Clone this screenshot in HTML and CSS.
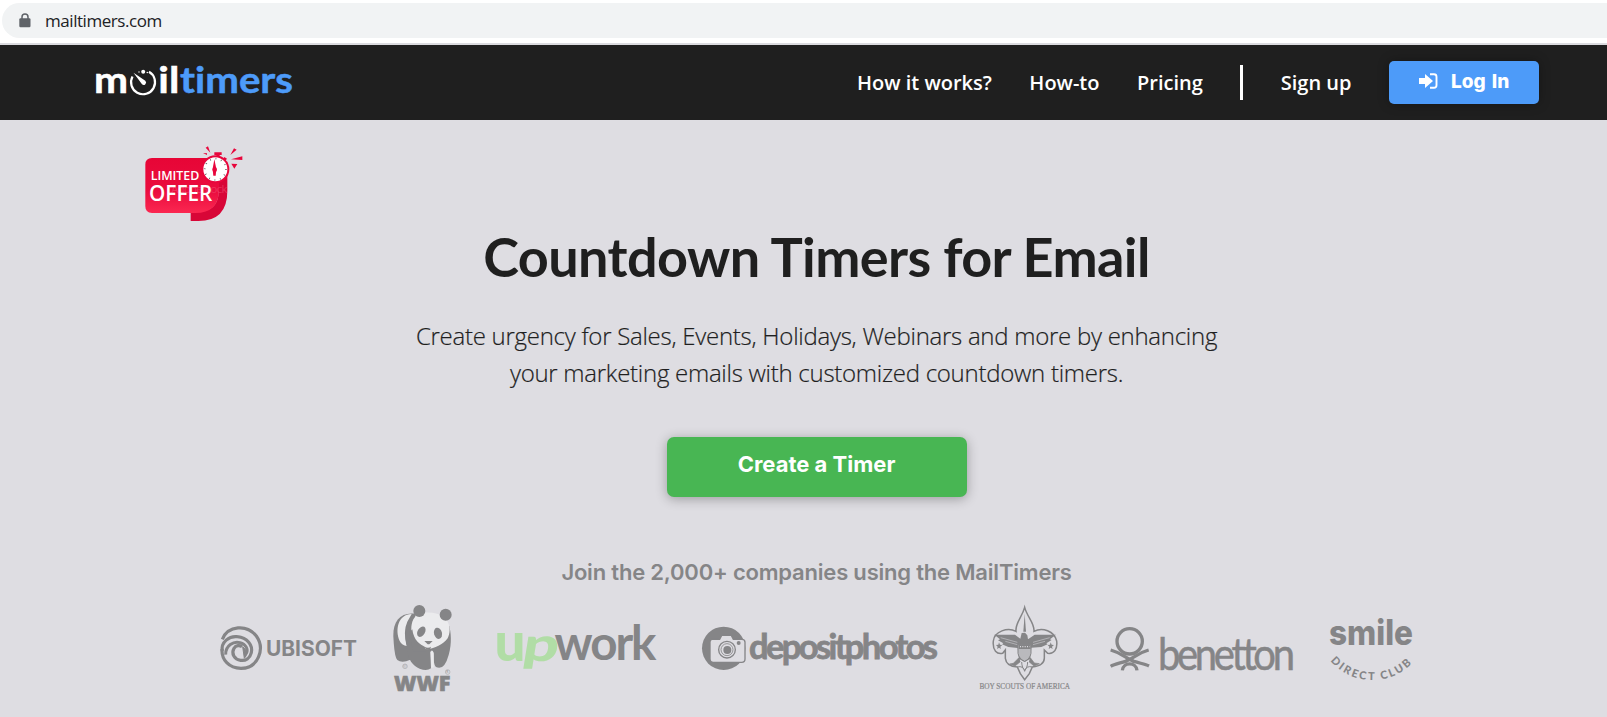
FILE: index.html
```html
<!DOCTYPE html>
<html lang="en">
<head>
<meta charset="utf-8">
<title>MailTimers</title>
<link rel="stylesheet" href="styles.css">
</head>
<body>
<div class="browser">
  <div class="address">
    <svg class="lock" viewBox="0 0 12 15"><path d="M3 6V4a3 3 0 0 1 6 0v2" fill="none" stroke="#5f6368" stroke-width="1.5"/><rect x=".3" y="5.3" width="11.2" height="9" rx="1.2" fill="#5f6368"/></svg>
    <span class="url">mailtimers.com</span>
  </div>
</div>
<header class="nav">
  <svg class="brand" viewBox="90 48 210 66">
    <g font-family="Lato" font-weight="700" font-size="36" stroke-width=".5">
      <text x="94" y="92.800" fill="#fff" stroke="#fff" textLength="34" lengthAdjust="spacingAndGlyphs">m</text>
      <text x="158.300" y="92.800" fill="#fff" stroke="#fff" textLength="21" lengthAdjust="spacingAndGlyphs">il</text>
      <text x="180" y="92.800" fill="#4d9bf9" stroke="#4d9bf9" textLength="113" lengthAdjust="spacingAndGlyphs">timers</text>
    </g>
    <path d="M149 71.800A12 12 0 1 1 132.500 76.500" fill="none" stroke="#fff" stroke-width="2.200"/>
    <path d="M133.500 72.800L145.300 80.800A2.200 2.200 0 0 1 142 84.200Z" fill="#fff"/>
    <circle cx="143.200" cy="71.700" r="2" fill="#fff"/><circle cx="139" cy="72" r=".7" fill="#fff"/><circle cx="147.300" cy="72.500" r=".8" fill="#fff"/>
  </svg>
  <nav class="links">
    <a>How it works?</a><a>How-to</a><a>Pricing</a><i class="rule"></i><a>Sign up</a>
    <a class="login"><svg class="enter" viewBox="0 0 19 16"><path d="M0 5h6V1l8 7-8 7v-4H0z" fill="#fff"/><path d="M11 1.200h4a2.500 2.500 0 0 1 2.500 2.500v8.600a2.500 2.500 0 0 1-2.500 2.500h-4" fill="none" stroke="#fff" stroke-width="1.900"/></svg><span>Log In</span></a>
  </nav>
</header>
<main class="hero">
  <svg class="offer" viewBox="0 0 390 300">
    <defs><linearGradient id="red" x1="0" y1="0" x2="0" y2="1"><stop offset="0" stop-color="#e70536"/><stop offset=".6" stop-color="#ea0d3e"/><stop offset="1" stop-color="#fb2751"/></linearGradient></defs>
    <path d="M182 222H240Q270 205 266 150V80H292V168Q292 258 205 258H182Z" fill="#d80637"/>
    <path d="M66 69H267V165Q267 234 195 234H66Q46 234 46 214V89Q46 69 66 69Z" fill="url(#red)"/>
    <text x="124" y="174" class="stock" textLength="168">AdobeStock</text>
    <g class="offer-text"><text x="62" y="136" font-size="40" textLength="146" lengthAdjust="spacingAndGlyphs">LIMITED</text><text x="57" y="199" font-size="64" textLength="190" lengthAdjust="spacingAndGlyphs">OFFER</text></g>
    <path d="M253 52h22v8h-6v8h-10v-8h-6zM283 66l8 5-6 8-6-6z" fill="#e8063c"/>
    <circle cx="256" cy="103" r="39" fill="#fff" stroke="#e8063c" stroke-width="6"/>
    <circle cx="256" cy="103" r="32" fill="none" stroke="#444" stroke-width="5" stroke-dasharray="2 14.750"/>
    <path d="M253 73L259 101 257 122H250L248 101Z" fill="#e8063c"/><circle cx="254" cy="104" r="7" fill="#e8063c"/>
    <path d="M227 38l7-4 7 19zM219 54l12 1v5zM301 60l11-20 8 4zM303 73l34-9v11zM304 86l18 1-9 14z" fill="#e8063c"/>
  </svg>
  <h1>Countdown Timers for Email</h1>
  <p class="lead">Create urgency for Sales, Events, Holidays, Webinars and more by enhancing<br>your marketing emails with customized countdown timers.</p>
  <a class="cta">Create a Timer</a>
  <p class="join">Join the 2,000+ companies using the MailTimers</p>
  <div class="logos">
    <svg width="138" height="100" viewBox="219 602 138 100">
      <g transform="translate(200 590) scale(.33333)" fill="none" stroke="#858587" stroke-width="9.500">
        <path d="M67 148C84 106 141 102 169 138C196 176 175 235 123 235C87 235 64 209 66 177"/>
        <path d="M67 183C62 156 88 137 112 140C142 143 159 166 154 188C150 205 137 213 122 211C103 209 93 191 102 175C108 165 119 165 126 170"/>
        <path d="M77 194C76 166 101 153 120 158C139 163 146 180 138 192" stroke-width="9"/>
        <path d="M128 170Q150 188 133 205Z" fill="#858587" stroke-width="3"/>
      </g>
      <text x="266" y="656.300" font-family="Inter" font-size="21" font-weight="700" textLength="91" lengthAdjust="spacingAndGlyphs">UBISOFT</text>
    </svg>
    <svg width="64" height="100" viewBox="393 602 64 100">
      <g transform="translate(200 590) scale(.33333)">
        <path d="M645 71C602 66 579 93 580 137C582 176 585 202 592 210Q606 221 631 209L650 170Z"/>
        <path d="M635 72C595 73 584 118 599 153Q606 167 621 168Q608 125 622 95Z" fill="#ebebed"/>
        <path d="M644 80C616 86 612 132 620 168C622 211 640 228 659 236Q680 245 693 235L691 186Q698 176 701 190C701 210 701 224 708 231Q733 243 746 195C757 158 752 126 748 108Z"/>
        <path d="M637 95C645 67 683 63 711 71C743 78 759 113 743 145C730 163 702 176 684 178C650 174 625 133 637 95Z" fill="#ebebed"/>
        <path d="M637 118C640 151 662 165 674 170L680 184H640L626 130Z"/>
        <circle cx="658" cy="63" r="18"/><circle cx="737" cy="74" r="18"/>
        <ellipse cx="664" cy="125" rx="11" ry="17" transform="rotate(30 664 125)"/><ellipse cx="714" cy="130" rx="12" ry="17" transform="rotate(-15 714 130)"/>
        <path d="M673 153h25l-10 10h-5zM673 170q12 6 20 0l-3 9q-12 2-17-9z"/>
        <path d="M692 186Q701 178 701 196V232L694 234Z" fill="#ebebed"/>
        <g fill="none" stroke="#aaaaad" stroke-width="2"><circle cx="615" cy="229" r="7"/><circle cx="743" cy="246" r="7"/></g><text x="610" y="234" font-size="12">©</text><text x="739" y="250" font-size="10">R</text>
      </g>
      <text x="394" y="691.300" font-family="Open Sans" font-size="20.500" font-weight="800" textLength="56.500" lengthAdjust="spacingAndGlyphs" stroke="#858587" stroke-width=".6">WWF</text>
    </svg>
    <svg width="170" height="100" viewBox="493 602 170 100" font-family="Lato" font-weight="900">
      <g fill="#b1dda6"><text x="494.500" y="660.500" font-size="53" textLength="31" lengthAdjust="spacingAndGlyphs">u</text><text transform="translate(521 660.500) skewX(-9)" font-size="47" textLength="36" lengthAdjust="spacingAndGlyphs">p</text></g>
      <text x="554.500" y="660.300" font-size="47.500" font-weight="700" textLength="102" lengthAdjust="spacing">work</text>
    </svg>
    <svg width="242" height="100" viewBox="699 602 242 100">
      <g transform="translate(690 600) scale(.33333)"><circle cx="101" cy="145" r="65"/><path d="M67 118H89L95 106H124L130 118H156Q165 118 165 127V177Q165 187 155 187H69Q60 187 60 178V126Q60 118 67 118Z" fill="#dedde2" stroke="#858587" stroke-width="4"/><circle cx="111" cy="149" r="25" fill="none" stroke="#858587" stroke-width="4"/><circle cx="111" cy="149" r="18" fill="none" stroke="#858587" stroke-width="2.500"/><circle cx="112" cy="150" r="12"/><circle cx="146" cy="129" r="6"/></g>
      <text x="749" y="659.300" font-family="Lato" font-size="34.500" font-weight="700" textLength="189" lengthAdjust="spacing" stroke="#858587" stroke-width=".8">depositphotos</text>
    </svg>
    <svg width="95" height="100" viewBox="977 602 95 100">
      <g transform="translate(960 590) scale(.33333)">
        <path d="M194 52C186 82 165 99 168 124C143 111 103 124 100 153C97 182 111 194 128 190L136 180V205C138 221 150 230 172 231L181 251 194 269 208 251 217 231C240 228 254 219 253 202V180L263 190C282 193 293 178 290 153C283 123 247 111 222 124C224 99 202 82 194 52Z" fill="none" stroke="#858587" stroke-width="4.500"/>
        <path d="M194 72L198 125H190Z"/>
        <path d="M103 134H165L181 146 185 129 195 128 202 136 204 148 224 134H288L270 148 275 150 259 160 263 163 244 171 214 173 210 207 194 216 177 207 173 174 145 171 126 163 130 160 114 151 120 148Z"/>
        <path d="M122 143l50 14M136 154l36 10M269 143l-50 14M255 154l-36 10" stroke="#dedde2" stroke-width="1.500"/>
        <path d="M174 164H213V190Q210 207 194 214Q177 207 174 190Z" fill="#b9b9bd" stroke="#858587" stroke-width="3"/><path d="M176 165h36v12h-36z"/><path d="M180 170h29" stroke="#dedde2" stroke-width="4" stroke-dasharray="3 4"/>
        <path d="M178 202L160 220 149 222 165 228 181 215M210 202L223 219 238 221 222 228 207 215" stroke="#858587" stroke-width="2"/>
        <path d="M185 216Q186 235 194 240Q202 235 203 216M172 231Q190 226 194 244Q198 226 217 231" fill="none" stroke="#858587" stroke-width="3"/>
        <path id="star" d="M117 157l3 7 7 1-6 5 2 7-6-4-6 4 2-7-5-5 7-1z"/><use href="#star" x="155"/>
      </g>
      <text x="979.500" y="689.200" font-family="Liberation Serif" font-size="8.300" textLength="90.500" lengthAdjust="spacingAndGlyphs" stroke="#858587" stroke-width=".2">BOY SCOUTS OF AMERICA</text>
    </svg>
    <svg width="186" height="100" viewBox="1108 602 186 100">
      <g transform="translate(1090 600) scale(.33333)" fill="none" stroke="#858587" stroke-width="10"><circle cx="119" cy="124" r="38"/><path d="M62 150C98 160 104 174 132 184C151 190 167 193 177 198M176 150C140 160 133 174 106 184C87 190 72 193 62 199M97 211C100 185 138 185 141 211" stroke-width="10"/></g>
      <text transform="translate(1158 669.800) scale(1 1.100)" font-family="Lato" font-size="40" textLength="137" lengthAdjust="spacing" stroke="#858587" stroke-width=".5">benetton</text>
    </svg>
    <svg width="84" height="100" viewBox="1330 602 84 100">
      <defs><path id="smile" d="M1330.500 661A55 55 0 0 0 1414 661"/></defs>
      <text x="1329" y="644.700" font-family="Inter" font-size="35" font-weight="800" textLength="84" lengthAdjust="spacingAndGlyphs">smile</text>
      <text font-family="Lato" font-size="11" font-weight="900"><textPath href="#smile" textLength="91">DIRECT CLUB</textPath></text>
    </svg>
  </div>
</main>
</body>
</html>
```
FILE: styles.css
```css
* { box-sizing: border-box; }
body { margin: 0; width: 1607px; height: 717px; overflow: hidden; background: #dedde2; color: #1f1f1f; font-family: "Open Sans", sans-serif; }
.browser { height: 45px; padding: 3px 0 0 2px; background: #fff; border-bottom: 2px solid #dbdbdf; }
.address { height: 35px; display: flex; align-items: center; padding-left: 17px; background: #f1f3f4; border-radius: 18px 0 0 18px; }
.lock { width: 12px; height: 15px; }
.url { margin-left: 14px; font-size: 17px; line-height: 24px; letter-spacing: -.45px; color: #202124; }
.nav { height: 75px; background: #1f1f1f; display: flex; justify-content: space-between; padding: 0 68px 0 90px; }
.brand { width: 210px; height: 66px; margin-top: 3px; font-variant-ligatures: none; }
.links { display: flex; align-items: center; gap: 37.5px; height: 75px; color: #fff; font-size: 20px; font-weight: 600; }
.rule { width: 3px; height: 35px; background: #fff; }
.login { width: 150px; height: 43px; padding-left: 30px; display: flex; align-items: center; background: #4d9bf9; border-radius: 5px; box-shadow: 0 0 12px rgba(0,0,0,.3); font: 800 19px Inter, sans-serif; }
.login span { margin: -2px 0 0 13px; word-spacing: 2px; }
.enter { width: 19px; height: 16px; margin-top: -3px; }
.hero { height: 597px; padding: 15px 0 0 26px; display: flex; flex-direction: column; align-items: center; }
.offer { width: 130px; height: 100px; align-self: flex-start; margin-left: 104px; flex: none; }
.offer-text { fill: #fff; font-family: "Open Sans"; font-weight: 600; }
.stock { fill: #f04a70; font: 34px "Open Sans"; opacity: .6; }
h1 { margin: -11px 0 0; font: 700 54px/66px Lato, sans-serif; letter-spacing: -.6px; white-space: nowrap; }
.lead { margin: 27px 0 0; font-size: 24px; font-weight: 300; line-height: 37px; letter-spacing: -.27px; -webkit-text-stroke: .2px #1f1f1f; text-align: center; white-space: nowrap; }
.cta { width: 300px; height: 60px; margin-top: 46px; padding-top: 13px; text-align: center; background: #48b653; border-radius: 7px; box-shadow: 0 2px 12px rgba(0,0,0,.3); color: #fff; font: 700 22px/29px Inter, sans-serif; }
.join { margin: 61px 0 0; font: 600 22px/28px Inter, sans-serif; letter-spacing: -.2px; color: #858587; white-space: nowrap; }
.logos { display: flex; gap: 36px; margin-top: 16px; fill: #858587; font-variant-ligatures: none; }
.logos svg { flex: none; overflow: visible; }
```
